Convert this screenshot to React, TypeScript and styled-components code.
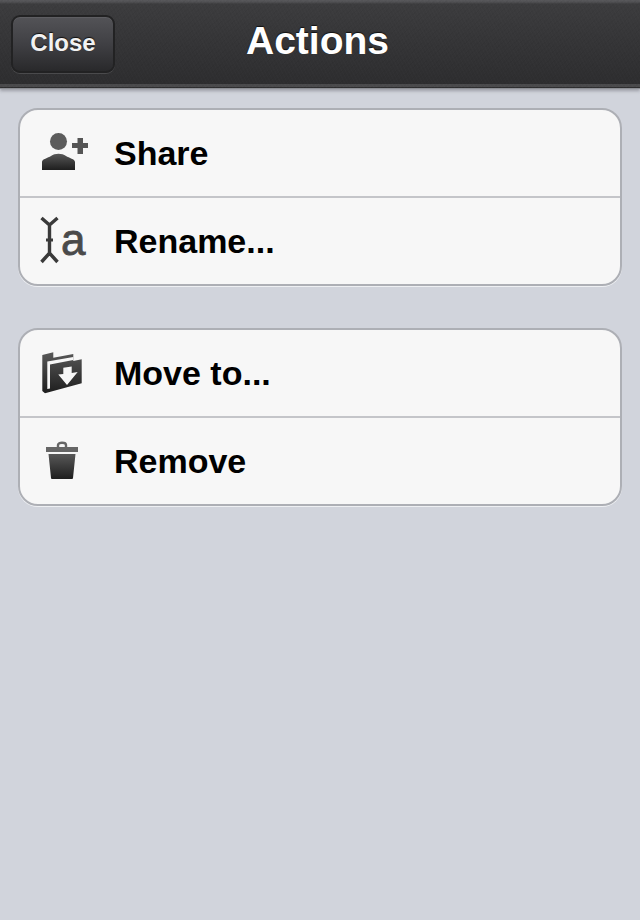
import React from 'react'
import styled, { createGlobalStyle } from 'styled-components'

const GlobalStyle = createGlobalStyle`
  html, body {
    margin: 0;
    padding: 0;
    background: #d1d4dc;
    font-family: "Liberation Sans", Arial, sans-serif;
  }
`

const Page = styled.div`
  width: 640px;
  height: 920px;
  overflow: hidden;
  background: #d1d4dc;
`

const NavBar = styled.header`
  box-sizing: border-box;
  height: 88px;
  padding: 15px 11px 0;
  position: relative;
  background:
    repeating-linear-gradient(63deg, rgba(255, 255, 255, 0.012) 0 1px, transparent 1px 3px),
    repeating-linear-gradient(-41deg, rgba(0, 0, 0, 0.03) 0 1px, transparent 1px 4px),
    linear-gradient(#58585b 0, #505053 2px, #3c3c3e 4px, #353537 40px, #2d2d2f 84px, #4a4a4c 84px, #4a4a4c 87px, #2e2e30 87px);
  box-shadow: 0 1px 0 #8d8f95, 0 3px 3px rgba(90, 92, 100, 0.45);
`

const Title = styled.h1`
  position: absolute;
  left: 0;
  right: 5px;
  top: 18px;
  margin: 0;
  text-align: center;
  color: #fff;
  font-size: 39px;
  line-height: 46px;
  font-weight: 700;
  text-shadow: 0 -1px 1px #111;
`

const NavButton = styled.button`
  box-sizing: border-box;
  width: 104px;
  height: 58px;
  padding: 0 0 3px;
  border: 2px solid #222223;
  border-radius: 9px;
  background: linear-gradient(#535357, #404044 50%, #29292b);
  box-shadow: inset 0 1px 0 #5e5e62, 0 1px 0 #4a4a4c;
  color: #f2f2f2;
  font-family: inherit;
  font-size: 24px;
  font-weight: 700;
  text-shadow: 0 -1px 1px #111;
`

const Content = styled.main`
  display: flex;
  flex-direction: column;
  gap: 42px;
  padding: 20px 18px 0;
`

const Group = styled.section`
  box-sizing: border-box;
  height: 178px;
  border-radius: 20px;
  background: #f7f7f7;
  border: 2px solid #adafb5;
  box-shadow: 0 1px 0 #eef0f3;
  display: flex;
  flex-direction: column;
  overflow: hidden;
`

const Row = styled.div`
  flex: 1;
  display: flex;
  align-items: center;
  min-height: 0;
  & + & {
    border-top: 2px solid #c4c5c9;
  }
`

const IconSlot = styled.span`
  flex: none;
  width: 94px;
  display: flex;
  align-items: center;
  box-sizing: border-box;
  padding-left: 20px;
`

const Label = styled.span`
  color: #000;
  font-size: 34px;
  font-weight: 700;
`

const IconDefs = () => (
  <svg width="0" height="0" style={{ position: 'absolute' }}>
    <defs>
      <linearGradient id="glyph" x1="0" y1="0" x2="0" y2="1">
        <stop offset="0" stopColor="#585858" />
        <stop offset="1" stopColor="#1e1e1e" />
      </linearGradient>
    </defs>
  </svg>
)

const ShareIcon = () => (
  <svg width="52" height="40" viewBox="0 0 52 40">
    <circle cx="18.5" cy="8.5" r="8.5" fill="#5c5c5c" />
    <path d="M2 37V29C2 26 8 25 11 23C15 20 22 20 26 23C29 25 35 26 35 29V37Z" fill="url(#glyph)" />
    <path d="M37.5 5H43V10H48V15H43V21H37.5V15H32V10H37.5Z" fill="#555" />
  </svg>
)

const RenameIcon = () => (
  <svg width="56" height="50" viewBox="0 0 56 50">
    <path d="M1.5 2L9.5 9L17.5 2M9.5 9V37M1.5 46L9.5 37L17.5 46" fill="none" stroke="#3a3a3a" strokeWidth="3.4" />
    <path d="M6 24H13" stroke="#3a3a3a" strokeWidth="3" />
    <text x="21" y="39" fontFamily="'Liberation Sans', sans-serif" fontSize="44" stroke="#4a4a4a" strokeWidth="0.8" fill="#4a4a4a">a</text>
  </svg>
)

const MoveIcon = () => (
  <svg width="44" height="44" viewBox="0 0 44 44">
    <path d="M2.3 4L13.3 1.3V6.7L33.3 3V10L41.7 8.3V32.3L5 42.3L2.3 40Z" fill="url(#glyph)" />
    <path d="M7.3 38V10.5L33.3 6V9L10 13.4V37.4Z" fill="#f7f7f7" />
    <path d="M23.3 16.7L31.7 15.5V22L37.7 21L27 34L18.3 23.5L23.3 23Z" fill="#f7f7f7" />
  </svg>
)

const TrashIcon = () => (
  <svg width="44" height="40" viewBox="0 0 44 40">
    <path d="M6 6H38V11H6Z" fill="#666" />
    <path d="M18 6V4C18 1 26 1 26 4V6" fill="none" stroke="#666" strokeWidth="2.4" />
    <path d="M8.5 13H35.5L33 37Q33 38 32 38H12Q11 38 11 37Z" fill="url(#glyph)" />
  </svg>
)

const groups = [
  [
    { label: 'Share', icon: <ShareIcon /> },
    { label: 'Rename...', icon: <RenameIcon /> },
  ],
  [
    { label: 'Move to...', icon: <MoveIcon /> },
    { label: 'Remove', icon: <TrashIcon /> },
  ],
]

export default function App() {
  return (
    <Page>
      <GlobalStyle />
      <IconDefs />
      <NavBar>
        <NavButton>Close</NavButton>
        <Title>Actions</Title>
      </NavBar>
      <Content>
        {groups.map((rows, i) => (
          <Group key={i}>
            {rows.map((row) => (
              <Row key={row.label}>
                <IconSlot>{row.icon}</IconSlot>
                <Label>{row.label}</Label>
              </Row>
            ))}
          </Group>
        ))}
      </Content>
    </Page>
  )
}
